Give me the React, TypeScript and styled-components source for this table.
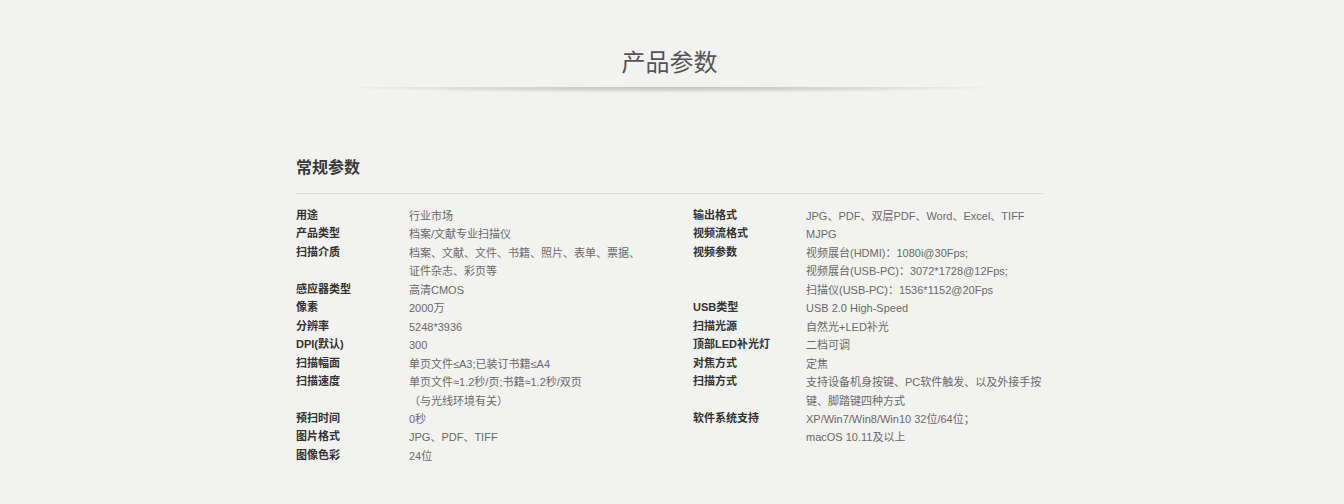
import React from "react";
import styled, { createGlobalStyle } from "styled-components";

const GlobalStyle = createGlobalStyle`
  html, body {
    margin: 0;
    padding: 0;
    background: #f2f2f0;
  }
  body {
    font-family: "Liberation Sans", "Noto Sans CJK SC", Arial, sans-serif;
  }
`;

const Page = styled.div`
  width: 100%;
  min-height: 504px;
  background: #f2f2f0;
  padding: 45px 5px 0 0;
  box-sizing: border-box;
`;

const Title = styled.h1`
  margin: 0;
  text-align: center;
  font-size: 24px;
  line-height: 32px;
  font-weight: normal;
  color: #555;
  font-family: "Noto Sans CJK SC", sans-serif;
`;

const TitleShadow = styled.div`
  width: 670px;
  height: 6px;
  margin: 10px auto 0;
  background: radial-gradient(
    ellipse 50% 100% at 50% 0%,
    rgba(0, 0, 0, 0.2) 0%,
    rgba(0, 0, 0, 0.12) 50%,
    rgba(0, 0, 0, 0) 100%
  );
`;

const Section = styled.section`
  width: 747px;
  margin: 61px auto 0;
`;

const SectionHeading = styled.h2`
  margin: 0;
  font-size: 16px;
  line-height: 24px;
  font-weight: bold;
  color: #3a3a3a;
  padding-bottom: 15px;
  border-bottom: 1px solid #dcdcdc;
  font-family: "Noto Sans CJK SC", sans-serif;
`;

const Columns = styled.div`
  display: flex;
  margin-top: 13px;
`;

const Column = styled.div<{ $width: number }>`
  width: ${(p) => p.$width}px;
  flex: none;
  display: flex;
  flex-direction: column;
`;

const Row = styled.div`
  display: flex;
  font-size: 11px;
  line-height: 18.46px;
`;

const Label = styled.div<{ $width: number }>`
  width: ${(p) => p.$width}px;
  flex: none;
  color: #333;
  font-weight: bold;
  position: relative;
  top: -1px;
`;

const Value = styled.div`
  color: #6a6a6a;
  white-space: nowrap;
`;

const Line = styled.div``;

type Spec = { label: string; lines: string[] };

const left: Spec[] = [
  { label: "用途", lines: ["行业市场"] },
  { label: "产品类型", lines: ["档案/文献专业扫描仪"] },
  {
    label: "扫描介质",
    lines: ["档案、文献、文件、书籍、照片、表单、票据、", "证件杂志、彩页等"],
  },
  { label: "感应器类型", lines: ["高清CMOS"] },
  { label: "像素", lines: ["2000万"] },
  { label: "分辨率", lines: ["5248*3936"] },
  { label: "DPI(默认)", lines: ["300"] },
  { label: "扫描幅面", lines: ["单页文件≤A3;已装订书籍≤A4"] },
  {
    label: "扫描速度",
    lines: ["单页文件≈1.2秒/页;书籍≈1.2秒/双页", "（与光线环境有关）"],
  },
  { label: "预扫时间", lines: ["0秒"] },
  { label: "图片格式", lines: ["JPG、PDF、TIFF"] },
  { label: "图像色彩", lines: ["24位"] },
];

const right: Spec[] = [
  { label: "输出格式", lines: ["JPG、PDF、双层PDF、Word、Excel、TIFF"] },
  { label: "视频流格式", lines: ["MJPG"] },
  {
    label: "视频参数",
    lines: [
      "视频展台(HDMI)：1080i@30Fps;",
      "视频展台(USB-PC)：3072*1728@12Fps;",
      "扫描仪(USB-PC)：1536*1152@20Fps",
    ],
  },
  { label: "USB类型", lines: ["USB 2.0 High-Speed"] },
  { label: "扫描光源", lines: ["自然光+LED补光"] },
  { label: "顶部LED补光灯", lines: ["二档可调"] },
  { label: "对焦方式", lines: ["定焦"] },
  {
    label: "扫描方式",
    lines: ["支持设备机身按键、PC软件触发、以及外接手按", "键、脚踏键四种方式"],
  },
  {
    label: "软件系统支持",
    lines: ["XP/Win7/Win8/Win10 32位/64位；", "macOS 10.11及以上"],
  },
];

const SpecColumn: React.FC<{ items: Spec[]; width: number; labelWidth: number }> = ({
  items,
  width,
  labelWidth,
}) => (
  <Column $width={width}>
    {items.map((it) => (
      <Row key={it.label}>
        <Label $width={labelWidth}>{it.label}</Label>
        <Value>
          {it.lines.map((l, i) => (
            <Line key={i}>{l}</Line>
          ))}
        </Value>
      </Row>
    ))}
  </Column>
);

export default function App() {
  return (
    <>
      <GlobalStyle />
      <Page>
        <Title>产品参数</Title>
        <TitleShadow />
        <Section>
          <SectionHeading>常规参数</SectionHeading>
          <Columns>
            <SpecColumn items={left} width={397} labelWidth={113} />
            <SpecColumn items={right} width={350} labelWidth={113} />
          </Columns>
        </Section>
      </Page>
    </>
  );
}
